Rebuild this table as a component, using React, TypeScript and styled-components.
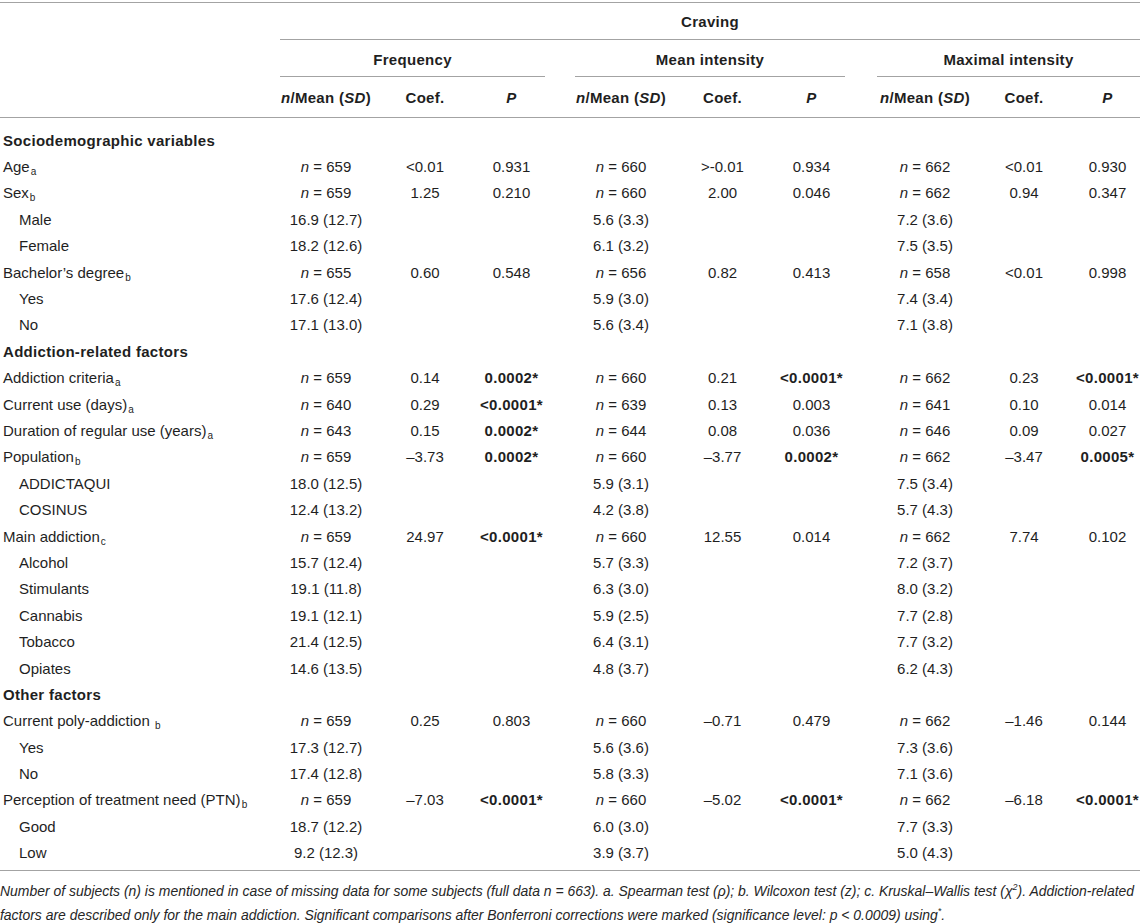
import React from 'react';
import styled, { createGlobalStyle } from 'styled-components';

const GlobalStyle = createGlobalStyle`
  *, *::before, *::after { box-sizing: border-box; }
  html, body { margin: 0; padding: 0; background: #ffffff; }
  body {
    font-family: "Liberation Sans", Arial, Helvetica, sans-serif;
    color: #1f1f1f;
    -webkit-font-smoothing: antialiased;
  }
`;

const COLS = '280px 92px 106px 67px 30px 92px 111px 67px 32px 96px 102px 65px';
const RULE = '1px solid #a3a3a3';

const Page = styled.div`
  width: 1140px;
  padding-top: 2px;
`;

const Table = styled.div`
  border-top: ${RULE};
`;

const HeadRow = styled.div<{ $h: number; $rule?: boolean }>`
  display: grid;
  grid-template-columns: ${COLS};
  height: ${(p) => p.$h}px;
  border-bottom: ${(p) => (p.$rule ? RULE : 'none')};
  align-items: stretch;
`;

const SpanHead = styled.div<{ $from: number; $to: number; $pad?: number }>`
  grid-column: ${(p) => p.$from} / ${(p) => p.$to};
  border-bottom: ${RULE};
  display: flex;
  align-items: center;
  justify-content: center;
  padding-top: ${(p) => p.$pad ?? 0}px;
  font-size: 15px;
  font-weight: 700;
  letter-spacing: 0.3px;
`;

const ColHead = styled.div<{ $col: number }>`
  grid-column: ${(p) => p.$col};
  display: flex;
  align-items: center;
  justify-content: center;
  font-size: 15px;
  font-weight: 700;
  letter-spacing: 0.3px;
  white-space: nowrap;
`;

const Body = styled.div`
  padding: 9px 0 4px;
  border-bottom: ${RULE};
`;

const Row = styled.div`
  display: grid;
  grid-template-columns: ${COLS};
  height: 26.4px;
  align-items: center;
  font-size: 15px;
`;

const Label = styled.div<{ $indent?: boolean; $section?: boolean }>`
  grid-column: ${(p) => (p.$section ? '1 / -1' : '1')};
  padding-left: ${(p) => (p.$indent ? 19 : 3)}px;
  font-weight: ${(p) => (p.$section ? 700 : 400)};
  letter-spacing: ${(p) => (p.$section ? '0.3px' : '0')};
  white-space: nowrap;
`;

const Cell = styled.div<{ $col: number; $bold?: boolean }>`
  grid-column: ${(p) => p.$col};
  text-align: center;
  white-space: nowrap;
  font-weight: ${(p) => (p.$bold ? 700 : 400)};
  letter-spacing: ${(p) => (p.$bold ? '0.3px' : '0')};
`;

const Sub = styled.sub`
  font-size: 10px;
  vertical-align: -3px;
  line-height: 0;
  margin-left: 1px;
`;

const Sup = styled.sup`
  font-size: 9px;
  vertical-align: 6px;
  line-height: 0;
`;

const Footnote = styled.div`
  padding-top: 8px;
  font-size: 13.95px;
  font-style: italic;
  line-height: 24px;
  color: #262626;
`;

const FootLine = styled.div`
  white-space: nowrap;
`;

type RowData = {
  label: string;
  sub?: string;
  subGap?: boolean;
  indent?: boolean;
  section?: boolean;
  vals?: string[];
};

const rows: RowData[] = [
  { label: 'Sociodemographic variables', section: true },
  { label: 'Age', sub: 'a', vals: ['n = 659', '<0.01', '0.931', 'n = 660', '>-0.01', '0.934', 'n = 662', '<0.01', '0.930'] },
  { label: 'Sex', sub: 'b', vals: ['n = 659', '1.25', '0.210', 'n = 660', '2.00', '0.046', 'n = 662', '0.94', '0.347'] },
  { label: 'Male', indent: true, vals: ['16.9 (12.7)', '', '', '5.6 (3.3)', '', '', '7.2 (3.6)', '', ''] },
  { label: 'Female', indent: true, vals: ['18.2 (12.6)', '', '', '6.1 (3.2)', '', '', '7.5 (3.5)', '', ''] },
  { label: 'Bachelor\u2019s degree', sub: 'b', vals: ['n = 655', '0.60', '0.548', 'n = 656', '0.82', '0.413', 'n = 658', '<0.01', '0.998'] },
  { label: 'Yes', indent: true, vals: ['17.6 (12.4)', '', '', '5.9 (3.0)', '', '', '7.4 (3.4)', '', ''] },
  { label: 'No', indent: true, vals: ['17.1 (13.0)', '', '', '5.6 (3.4)', '', '', '7.1 (3.8)', '', ''] },
  { label: 'Addiction-related factors', section: true },
  { label: 'Addiction criteria', sub: 'a', vals: ['n = 659', '0.14', '0.0002*', 'n = 660', '0.21', '<0.0001*', 'n = 662', '0.23', '<0.0001*'] },
  { label: 'Current use (days)', sub: 'a', vals: ['n = 640', '0.29', '<0.0001*', 'n = 639', '0.13', '0.003', 'n = 641', '0.10', '0.014'] },
  { label: 'Duration of regular use (years)', sub: 'a', vals: ['n = 643', '0.15', '0.0002*', 'n = 644', '0.08', '0.036', 'n = 646', '0.09', '0.027'] },
  { label: 'Population', sub: 'b', vals: ['n = 659', '\u20133.73', '0.0002*', 'n = 660', '\u20133.77', '0.0002*', 'n = 662', '\u20133.47', '0.0005*'] },
  { label: 'ADDICTAQUI', indent: true, vals: ['18.0 (12.5)', '', '', '5.9 (3.1)', '', '', '7.5 (3.4)', '', ''] },
  { label: 'COSINUS', indent: true, vals: ['12.4 (13.2)', '', '', '4.2 (3.8)', '', '', '5.7 (4.3)', '', ''] },
  { label: 'Main addiction', sub: 'c', vals: ['n = 659', '24.97', '<0.0001*', 'n = 660', '12.55', '0.014', 'n = 662', '7.74', '0.102'] },
  { label: 'Alcohol', indent: true, vals: ['15.7 (12.4)', '', '', '5.7 (3.3)', '', '', '7.2 (3.7)', '', ''] },
  { label: 'Stimulants', indent: true, vals: ['19.1 (11.8)', '', '', '6.3 (3.0)', '', '', '8.0 (3.2)', '', ''] },
  { label: 'Cannabis', indent: true, vals: ['19.1 (12.1)', '', '', '5.9 (2.5)', '', '', '7.7 (2.8)', '', ''] },
  { label: 'Tobacco', indent: true, vals: ['21.4 (12.5)', '', '', '6.4 (3.1)', '', '', '7.7 (3.2)', '', ''] },
  { label: 'Opiates', indent: true, vals: ['14.6 (13.5)', '', '', '4.8 (3.7)', '', '', '6.2 (4.3)', '', ''] },
  { label: 'Other factors', section: true },
  { label: 'Current poly-addiction', sub: 'b', subGap: true, vals: ['n = 659', '0.25', '0.803', 'n = 660', '\u20130.71', '0.479', 'n = 662', '\u20131.46', '0.144'] },
  { label: 'Yes', indent: true, vals: ['17.3 (12.7)', '', '', '5.6 (3.6)', '', '', '7.3 (3.6)', '', ''] },
  { label: 'No', indent: true, vals: ['17.4 (12.8)', '', '', '5.8 (3.3)', '', '', '7.1 (3.6)', '', ''] },
  { label: 'Perception of treatment need (PTN)', sub: 'b', vals: ['n = 659', '\u20137.03', '<0.0001*', 'n = 660', '\u20135.02', '<0.0001*', 'n = 662', '\u20136.18', '<0.0001*'] },
  { label: 'Good', indent: true, vals: ['18.7 (12.2)', '', '', '6.0 (3.0)', '', '', '7.7 (3.3)', '', ''] },
  { label: 'Low', indent: true, vals: ['9.2 (12.3)', '', '', '3.9 (3.7)', '', '', '5.0 (4.3)', '', ''] },
];

// value index -> grid column
const VAL_COLS = [2, 3, 4, 6, 7, 8, 10, 11, 12];

function renderValue(v: string) {
  if (v.startsWith('n = ')) {
    return (
      <>
        <i>n</i>
        {v.slice(1)}
      </>
    );
  }
  return v;
}

const ColTitles: React.FC<{ start: number }> = ({ start }) => (
  <>
    <ColHead $col={start}>
      <i>n</i>/Mean (<i>SD</i>)
    </ColHead>
    <ColHead $col={start + 1}>Coef.</ColHead>
    <ColHead $col={start + 2}>
      <i>P</i>
    </ColHead>
  </>
);

export default function App() {
  return (
    <Page>
      <GlobalStyle />
      <Table>
        <HeadRow $h={37}>
          <SpanHead $from={2} $to={13} $pad={1}>
            Craving
          </SpanHead>
        </HeadRow>
        <HeadRow $h={37}>
          <SpanHead $from={2} $to={5} $pad={3}>
            Frequency
          </SpanHead>
          <SpanHead $from={6} $to={9} $pad={3}>
            Mean intensity
          </SpanHead>
          <SpanHead $from={10} $to={13} $pad={3}>
            Maximal intensity
          </SpanHead>
        </HeadRow>
        <HeadRow $h={41} $rule>
          <ColTitles start={2} />
          <ColTitles start={6} />
          <ColTitles start={10} />
        </HeadRow>
        <Body>
          {rows.map((r, i) => (
            <Row key={i}>
              <Label $indent={r.indent} $section={r.section}>
                {r.label}
                {r.sub && (
                  <>
                    {r.subGap ? ' ' : ''}
                    <Sub>{r.sub}</Sub>
                  </>
                )}
              </Label>
              {r.vals &&
                r.vals.map((v, j) =>
                  v ? (
                    <Cell key={j} $col={VAL_COLS[j]} $bold={v.endsWith('*')}>
                      {renderValue(v)}
                    </Cell>
                  ) : null
                )}
            </Row>
          ))}
        </Body>
      </Table>
      <Footnote>
        <FootLine>
          Number of subjects (n) is mentioned in case of missing data for some subjects (full data n = 663). a. Spearman
          test (ρ); b. Wilcoxon test (z); c. Kruskal–Wallis test (χ<Sup>2</Sup>). Addiction-related
        </FootLine>
        <FootLine>
          factors are described only for the main addiction. Significant comparisons after Bonferroni corrections were
          marked (significance level: p &lt; 0.0009) using<Sup>*</Sup>.
        </FootLine>
      </Footnote>
    </Page>
  );
}
